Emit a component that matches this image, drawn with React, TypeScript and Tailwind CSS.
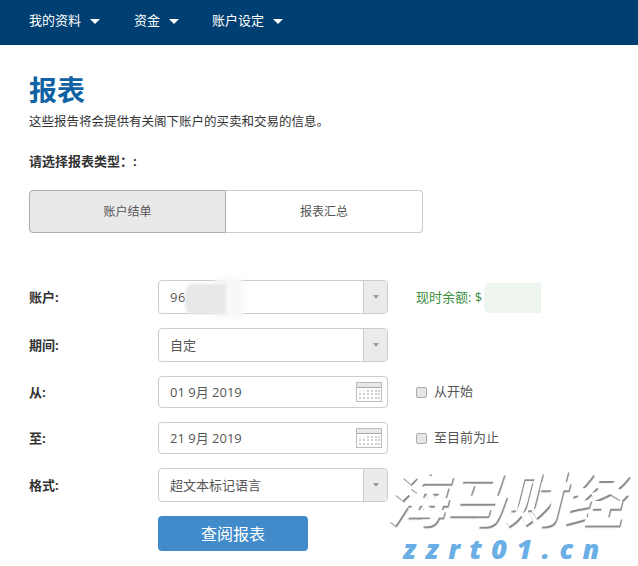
import React from "react";

const font = { fontFamily: '"Open Sans", "Noto Sans CJK SC", sans-serif' };

const Caret = () => (
  <span className="ml-[9px] inline-block h-0 w-0 border-x-[5px] border-t-[5px] border-x-transparent border-t-white" />
);

const NavItem: React.FC<{ label: string; className?: string }> = ({ label, className }) => (
  <div className={`flex items-center text-[13px] text-white ${className ?? ""}`}>
    {label}
    <Caret />
  </div>
);

const Select: React.FC<{ value: React.ReactNode; className?: string }> = ({ value, className }) => (
  <div className={`flex h-[34px] w-[230px] rounded border border-[#ccc] bg-white ${className ?? ""}`}>
    <div className="flex flex-1 items-center pt-[2px] pl-[11px] text-[13px] text-[#555]">{value}</div>
    <div className="flex w-[24px] items-center justify-center rounded-r-[3px] border-l border-[#ccc] bg-[#ebebeb]">
      <span className="h-0 w-0 border-x-[3.5px] border-t-[4px] border-x-transparent border-t-[#999]" />
    </div>
  </div>
);

const CalendarIcon = () => (
  <svg width="26" height="20" viewBox="0 0 26 20" fill="none">
    <rect x="0.5" y="0.5" width="25" height="19" fill="#fff" stroke="#bcbcbc" />
    <rect x="1" y="1" width="24" height="4" fill="#e8e8e8" />
    <line x1="1" y1="5.5" x2="25" y2="5.5" stroke="#a8a8a8" />
    {[8, 11, 15].map((y) =>
      [3, 7, 11, 15, 19, 22].map((x) => (
        <rect key={`${x}-${y}`} x={x} y={y} width="2" height="2" fill={x < 11 && y === 8 ? "#f2f2f2" : "#cfcfcf"} />
      ))
    )}
  </svg>
);

const DateInput: React.FC<{ value: string }> = ({ value }) => (
  <div className="flex h-[32px] w-[230px] items-center justify-between rounded border border-[#ccc] bg-white pl-[11px] pr-[5px] text-[13px] text-[#555]">
    <span className="pt-[2px]">{value}</span>
    <CalendarIcon />
  </div>
);

const Check: React.FC<{ label: string }> = ({ label }) => (
  <div className="ml-[28px] flex items-center text-[13px] text-[#555]">
    <span className="mr-[7px] h-[11px] w-[11px] rounded-[2px] border border-[#aaa] bg-[#e6e6e6]" />
    {label}
  </div>
);

const Label: React.FC<{ text: string }> = ({ text }) => (
  <div className="w-[129px] pt-[2px] text-[13px] font-bold text-[#333]">{text}</div>
);

export default function App() {
  return (
    <div className="relative h-[566px] w-[638px] overflow-hidden bg-white" style={font}>
      <nav className="flex h-[45px] items-center bg-[#003f72] pl-[29px] pb-[3px]">
        <NavItem label="我的资料" className="mr-[34px]" />
        <NavItem label="资金" className="mr-[33px]" />
        <NavItem label="账户设定" />
      </nav>

      <div className="pl-[29px]">
        <h1 className="mt-[27px] text-[28px] leading-[36px] font-bold text-[#0f62a3]">报表</h1>
        <p className="mt-[5px] text-[12.5px] leading-[18px] text-[#333]">这些报告将会提供有关阁下账户的买卖和交易的信息。</p>
        <p className="mt-[21px] text-[13px] leading-[18px] font-bold text-[#333]">请选择报表类型：:</p>

        <div className="mt-[20px] flex h-[43px] w-[394px] text-[12px] text-[#555]">
          <div className="flex w-[197px] items-center justify-center rounded-l border border-[#adadad] bg-[#e9e9e9]">账户结单</div>
          <div className="flex w-[197px] items-center justify-center rounded-r border border-l-0 border-[#ccc] bg-white">报表汇总</div>
        </div>

        <div className="mt-[47px] flex items-center">
          <Label text="账户:" />
          <Select value={<span className="tracking-[0.5px]">96</span>} />
          <div className="ml-[28px] pt-[2px] text-[13px] text-[#3c8d3c]">现时余额: $</div>
        </div>
        <div className="mt-[14px] flex items-center">
          <Label text="期间:" />
          <Select value="自定" />
        </div>
        <div className="mt-[14px] flex items-center">
          <Label text="从:" />
          <DateInput value="01 9月 2019" />
          <Check label="从开始" />
        </div>
        <div className="mt-[14px] flex items-center">
          <Label text="至:" />
          <DateInput value="21 9月 2019" />
          <Check label="至目前为止" />
        </div>
        <div className="mt-[14px] flex items-center">
          <Label text="格式:" />
          <Select value="超文本标记语言" />
        </div>
        <div className="mt-[14px] pl-[129px]">
          <button className="h-[35px] w-[150px] rounded bg-[#428bca] text-[16px] text-white">查阅报表</button>
        </div>
      </div>

      {/* blurred-out account numbers */}
      <div className="absolute top-[277px] left-[214px] h-[42px] w-[30px] rounded-[8px] bg-[#f8f8f8] blur-[2px]" />
      <div className="absolute top-[284px] left-[185px] h-[30px] w-[41px] rounded-l-[8px] bg-[#e8e8e8] blur-[1px]" />
      <div className="absolute top-[283px] left-[484px] h-[30px] w-[57px] rounded-l-[6px] bg-[#eef5ef]" />

      {/* watermark */}
      <div className="absolute top-[466px] left-[386px] text-[59px] leading-[64px] font-black whitespace-nowrap text-white italic [text-shadow:1px_2px_1px_#888]">
        海马财经
      </div>
      <div className="absolute top-[533px] left-[403px] w-[235px] text-[27px] leading-[32px] font-black tracking-[9.5px] whitespace-nowrap text-[#6aaee6] italic">
        zzrt01.cn
      </div>
    </div>
  );
}
